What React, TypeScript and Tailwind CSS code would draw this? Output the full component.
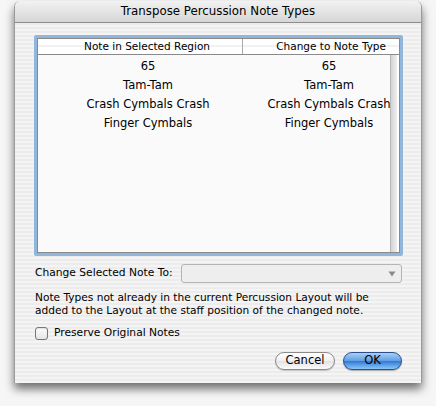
import React from "react";

const rows = [
  ["65", "65"],
  ["Tam-Tam", "Tam-Tam"],
  ["Crash Cymbals Crash", "Crash Cymbals Crash"],
  ["Finger Cymbals", "Finger Cymbals"],
];

export default function App() {
  return (
    <div
      className="w-[436px] h-[406px] bg-[#f6f6f6] overflow-hidden text-[#000]"
      style={{ fontFamily: '"DejaVu Sans", "Liberation Sans", sans-serif' }}
    >
      <div className="ml-[14px] mt-[1px] w-[408px] h-[382px] rounded-t-[6px] shadow-[0_6px_10px_rgba(0,0,0,0.55)] flex flex-col overflow-hidden border-x border-[#9a9a9a]">
        {/* title bar */}
        <div className="h-[22px] shrink-0 flex items-center justify-center bg-[linear-gradient(#f2f2f2,#d6d6d6)] border-b border-[#8c8c8c] text-[11.8px]">
          Transpose Percussion Note Types
        </div>
        {/* body */}
        <div className="flex-1 flex flex-col bg-[repeating-linear-gradient(#ececec_0px,#ececec_2px,#f4f4f4_2px,#f4f4f4_4px)] px-[19px] pt-[12px]">
          {/* table with focus ring */}
          <div className="w-[369px] h-[221px] rounded-[2px] border-[3px] border-[#92b5dc] flex flex-col bg-white">
            <div className="flex-1 flex flex-col border border-[#8a8a8a] overflow-hidden">
              <div className="h-[16px] shrink-0 flex text-[10.5px] border-b border-[#8a8a8a] bg-[linear-gradient(#ffffff_0px,#ffffff_6px,#e4e4e4_7px,#ffffff_8px,#ffffff)]">
                <div className="w-[205px] flex justify-end pr-[32px] items-center border-r border-[#a8a8a8] whitespace-nowrap">
                  Note in Selected Region
                </div>
                <div className="flex-1 flex justify-end pr-[13px] items-center whitespace-nowrap">
                  Change to Note Type
                </div>
              </div>
              <div className="flex-1 relative bg-[#fafafa] overflow-hidden">
                <div className="flex flex-col pt-[2px]">
                  {rows.map((r, i) => (
                    <div key={i} className="h-[19px] flex items-center text-[11.5px] whitespace-nowrap">
                      <div className="w-[220px] shrink-0 flex justify-center">
                        <span className="shrink-0">{r[0]}</span>
                      </div>
                      <div className="w-[142px] shrink-0 flex justify-center">
                        <span className="shrink-0">{r[1]}</span>
                      </div>
                    </div>
                  ))}
                </div>
                <div className="absolute top-0 bottom-0 right-[2px] w-[7px] border-l border-[#b8b8b8] bg-[linear-gradient(90deg,#d4d4d4,#eeeeee)]" />
                <div className="absolute top-0 bottom-0 right-0 w-[2px] bg-white" />
              </div>
            </div>
          </div>

          {/* popup row */}
          <div className="mt-[8px] flex items-center h-[19px]">
            <div className="w-[147px] text-[10.7px] pl-[1px] whitespace-nowrap">Change Selected Note To:</div>
            <div className="w-[222px] h-[19px] rounded-[3px] border border-[#b4b4b4] bg-[#eeeeee] flex items-center justify-end pr-[5px]">
              <svg width="8" height="6" viewBox="0 0 8 6">
                <path d="M0.5 0.5 L7.5 0.5 L4 5.5 Z" fill="#8a8a8a" />
              </svg>
            </div>
          </div>

          <div className="mt-[8px] text-[10.6px] leading-[13px] pl-[1px] whitespace-nowrap">
            Note Types not already in the current Percussion Layout will be
            <br />
            added to the Layout at the staff position of the changed note.
          </div>

          <div className="mt-[9px] flex items-center gap-[6px] pl-[1px] h-[14px]">
            <div className="w-[13px] h-[13px] rounded-[3px] border border-[#777] bg-[linear-gradient(#fcfcfc,#e6e6e6)] shadow-[inset_0_1px_1px_rgba(0,0,0,0.1)]" />
            <span className="text-[10.7px]">Preserve Original Notes</span>
          </div>

          <div className="mt-[12px] flex justify-end gap-[8px]">
            <div className="w-[60px] h-[18px] rounded-full border border-[#8a8a8a] bg-[linear-gradient(#ffffff,#f0f0f0_50%,#e2e2e2_51%,#fbfbfb)] flex items-center justify-center text-[11.5px] shadow-[0_1px_1px_rgba(0,0,0,0.2)]">
              Cancel
            </div>
            <div className="w-[59px] h-[18px] rounded-full border border-[#2a4f8c] bg-[linear-gradient(#a8d0f5,#5f9ce4_50%,#2f78d8_51%,#8cc6f8)] flex items-center justify-center text-[11.5px] shadow-[0_1px_1px_rgba(0,0,0,0.3)]">
              OK
            </div>
          </div>
        </div>
      </div>
    </div>
  );
}
